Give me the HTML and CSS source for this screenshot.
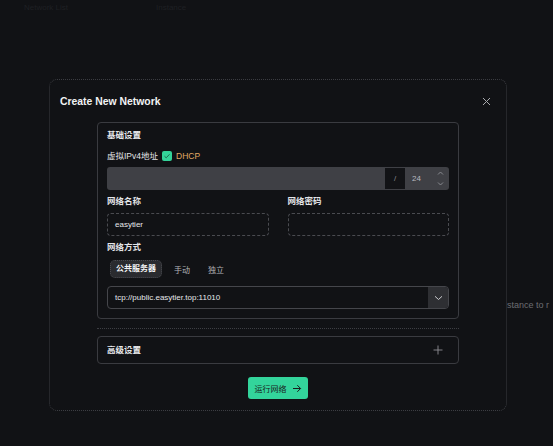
FILE: index.html
```html
<!DOCTYPE html>
<html>
<head>
<meta charset="utf-8">
<link rel="stylesheet" href="styles.css">
</head>
<body>
<div class="page">
  <div class="topbar"><span class="ghost g1">Network List</span><span class="ghost g2">Instance</span></div>
  <div class="empty-msg">stance to r</div>
</div>
<div class="modal">
  <div class="modal-head">
    <div class="modal-title">Create New Network</div>
    <svg class="close" width="9" height="9" viewBox="0 0 9 9"><path d="M1 1L8 8M8 1L1 8" stroke="#a9aaae" stroke-width="1"/></svg>
  </div>
  <div class="modal-body">
    <div class="card">
      <div class="sec-title">基础设置</div>
      <div class="dhcp-row">
        <span class="lbl">虚拟IPv4地址</span>
        <span class="check"><svg width="8" height="8" viewBox="0 0 8 8"><path d="M1.5 4.2L3.2 5.8L6.5 2.3" stroke="#1d5e47" stroke-width="0.9" fill="none"/></svg></span>
        <span class="dhcp">DHCP</span>
      </div>
      <div class="ip-input">
        <div class="ip-field"></div>
        <div class="ip-slash">/</div>
        <div class="ip-mask">24</div>
        <div class="ip-spin">
          <svg width="7" height="5" viewBox="0 0 7 5"><path d="M1 3.5L3.5 1L6 3.5" stroke="#8f9095" stroke-width="0.9" fill="none"/></svg>
          <svg width="7" height="5" viewBox="0 0 7 5"><path d="M1 1.5L3.5 4L6 1.5" stroke="#8f9095" stroke-width="0.9" fill="none"/></svg>
        </div>
      </div>
      <div class="two-col">
        <div class="col">
          <div class="lbl bold">网络名称</div>
          <div class="text-input">easytier</div>
        </div>
        <div class="col">
          <div class="lbl bold">网络密码</div>
          <div class="text-input"></div>
        </div>
      </div>
      <div class="lbl bold mode-lbl">网络方式</div>
      <div class="tabs">
        <span class="tab active">公共服务器</span>
        <span class="tab">手动</span>
        <span class="tab">独立</span>
      </div>
      <div class="select">
        <span class="select-val">tcp://public.easytier.top:11010</span>
        <span class="select-btn"><svg width="9" height="6" viewBox="0 0 9 6"><path d="M1 1.3L4.5 4.5L8 1.3" stroke="#c9cace" stroke-width="1" fill="none"/></svg></span>
      </div>
    </div>
    <div class="sep"></div>
    <div class="adv">
      <span class="sec-title">高级设置</span>
      <svg width="10" height="10" viewBox="0 0 10 10"><path d="M5 0.5V9.5M0.5 5H9.5" stroke="#8e8f94" stroke-width="0.9"/></svg>
    </div>
    <div class="actions">
      <button class="run">运行网络
        <svg width="10" height="9" viewBox="0 0 10 9"><path d="M1 4.5H8.5M5.3 1.2L8.6 4.5L5.3 7.8" stroke="#1a1d1c" stroke-width="1" fill="none"/></svg>
      </button>
    </div>
  </div>
</div>
</body>
</html>
```
FILE: styles.css
```css
* { box-sizing: border-box; }
html, body {
  margin: 0;
  padding: 0;
  background: #111215;
  width: 553px;
  height: 446px;
  overflow: hidden;
  font-family: "Liberation Sans", "Noto Sans CJK SC", sans-serif;
  color: #e6e7ea;
}
.page { position: relative; width: 553px; height: 446px; }
.topbar { display: flex; padding: 3px 0 0 24px; height: 20px; }
.ghost { font-size: 8px; color: #1f2024; }
.g2 { margin-left: 88px; }
.empty-msg {
  position: absolute;
  left: 507px;
  top: 300px;
  font-size: 9px;
  color: #6c6d72;
  white-space: nowrap;
}
.modal {
  position: absolute;
  left: 49px;
  top: 79px;
  width: 458px;
  height: 332px;
  background: #111215;
  border: 1px dotted #3c3d42;
  border-radius: 8px;
}
.modal-head {
  height: 42px;
  display: flex;
  align-items: center;
  justify-content: space-between;
  padding: 0 15px 0 10px;
}
.modal-title { font-size: 10.4px; font-weight: bold; color: #f1f2f4; }
.close { display: block; }
.modal-body { padding: 0 47px; }
.card {
  border: 1px solid #3a3b40;
  border-radius: 4px;
  padding: 6px 9px 9px 9px;
  height: 197px;
}
.sec-title { font-size: 8.5px; font-weight: bold; color: #e8e9ec; line-height: 12px; display: block; }
.lbl { font-size: 8.5px; color: #e3e4e7; line-height: 12px; }
.lbl.bold { font-weight: bold; }
.dhcp-row { display: flex; align-items: center; height: 12px; margin-top: 9px; }
.check {
  width: 10px; height: 10px;
  background: #34d399;
  border-radius: 2px;
  margin-left: 4px;
  display: flex; align-items: center; justify-content: center;
}
.dhcp { font-size: 8.5px; color: #e2a864; margin-left: 4px; }
.ip-input {
  margin-top: 5px;
  height: 23px;
  background: #3f4045;
  border-radius: 3px;
  display: flex;
  align-items: center;
  padding: 1px 2px 1px 0;
}
.ip-field { flex: 1; }
.ip-slash {
  width: 20px; height: 21px;
  background: #121316;
  color: #8a8b90;
  font-size: 8px;
  display: flex; align-items: center; justify-content: center;
}
.ip-mask { width: 28px; font-size: 8px; color: #b9bac0; padding-left: 7px; }
.ip-spin { width: 14px; display: flex; flex-direction: column; align-items: center; gap: 5px; }
.ip-spin svg { display: block; }
.two-col { display: flex; gap: 19px; margin-top: 5px; }
.col { flex: 1; }
.text-input {
  margin-top: 6px;
  height: 23px;
  border: 1px dashed #4a4b50;
  border-radius: 4px;
  font-size: 8px;
  color: #e6e7ea;
  padding: 6px 7px;
}
.mode-lbl { margin-top: 5px; }
.tabs { display: flex; align-items: center; margin-top: 7px; height: 18px; }
.tab { font-size: 8px; color: #b3b4b9; margin-right: 18px; }
.tab.active {
  background: #2a2b2f;
  border: 1px dotted #4a4b50;
  border-radius: 5px;
  color: #f2f3f5;
  font-weight: bold;
  padding: 3px 5px;
  margin-left: 3px;
  margin-right: 12px;
  line-height: 10px;
}
.select {
  margin-top: 8px;
  height: 23px;
  border: 1px solid #45464b;
  border-radius: 4px;
  display: flex;
  align-items: stretch;
}
.select-val { flex: 1; font-size: 8px; color: #e6e7ea; padding-left: 7px; display: flex; align-items: center; }
.select-btn {
  width: 20px;
  background: #2e2f33;
  border-radius: 0 3px 3px 0;
  display: flex; align-items: center; justify-content: center;
}
.sep { border-top: 1px dotted #3d3e43; margin-top: 9px; }
.adv {
  margin-top: 7px;
  height: 28px;
  border: 1px solid #3a3b40;
  border-radius: 4px;
  display: flex;
  align-items: center;
  justify-content: space-between;
  padding: 0 15px 0 9px;
}
.actions { display: flex; justify-content: center; margin-top: 13px; }
.run {
  height: 22px;
  width: 60px;
  background: #33d49b;
  border: none;
  border-radius: 3px;
  font-family: "Liberation Sans", "Noto Sans CJK SC", sans-serif;
  font-size: 8px;
  color: #1a1d1c;
  display: flex; align-items: center; justify-content: center;
  gap: 5px;
  padding: 0;
}
```
